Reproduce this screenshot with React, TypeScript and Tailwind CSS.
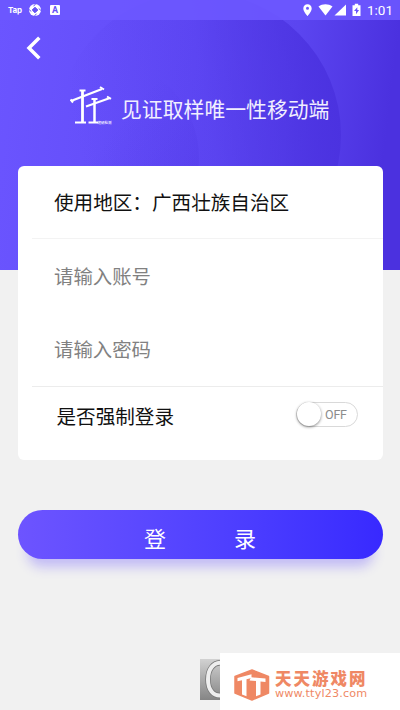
import React from 'react';

const cjk = "font-['Noto_Sans_CJK_SC',sans-serif]";

function StatusBar() {
  return (
    <div className="flex h-5 items-center bg-[#6d58ff]/90 pl-[8px] pr-[8px] text-white">
      <span className="w-[14px] text-[8px] font-bold leading-none tracking-[-0.2px] font-['Inter',sans-serif]">Tap</span>
      <svg className="ml-[7px] h-3 w-3" viewBox="0 0 12 12">
        <circle cx="6" cy="6" r="6" fill="white" />
        <path d="M6 3.200 8.800 6 6 8.800 3.200 6Z" fill="#6552f5" stroke="#6552f5" strokeWidth="1" />
        <path d="M6.500 0 4.500 2.300M12 6.500 9.700 4.500M5.500 12 7.500 9.700M0 5.500 2.300 7.500" stroke="#6552f5" strokeWidth="1" />
      </svg>
      <span className="ml-[9px] flex h-[10px] w-[10px] shrink-0 items-center justify-center rounded-[1px] bg-white text-[9px] font-bold leading-none text-[#6552f5] font-['Roboto',sans-serif]">A</span>
      <svg className="ml-auto h-[14px] w-[60px]" viewBox="0 0 60 14" fill="white">
        <path fillRule="evenodd" d="M5.500 1.200C3 1.200 1.300 3 1.300 5.400c0 3 4.200 7.600 4.200 7.600s4.200-4.600 4.200-7.600C9.700 3 8 1.200 5.500 1.200ZM5.500 3.800a1.500 1.500 0 1 1 0 3 1.500 1.500 0 0 1 0-3Z" />
        <path d="M16.500 3.600c4-3.200 9.800-3.200 14 0L23.500 12.500Z" />
        <path d="M44 1.500V12.500H32.500Z" />
        <path fillRule="evenodd" d="M52.800 0.700h3.400v1.500h2.300v10.700h-8V2.200h2.300ZM55.300 4.200 52 8.100h2v3.100L57.100 7H55.300Z" />
      </svg>
      <span className="ml-[5px] w-[25px] whitespace-nowrap text-[13.500px] leading-5 font-['Roboto',sans-serif]">1:01</span>
    </div>
  );
}

function HeaderBackdrop() {
  return (
    <svg className="absolute inset-0 h-[270px] w-full" viewBox="0 0 400 270" preserveAspectRatio="none">
      <defs>
        <linearGradient id="base" x1="0" y1="0" x2="1" y2="0.080">
          <stop offset="0" stopColor="#6b55ff" />
          <stop offset="0.500" stopColor="#614bf7" />
          <stop offset="0.750" stopColor="#5b45f0" />
          <stop offset="1" stopColor="#4b31df" />
        </linearGradient>
        <linearGradient id="large" gradientUnits="userSpaceOnUse" x1="75" y1="140" x2="341" y2="95">
          <stop offset="0" stopColor="#4a31df" stopOpacity="0" />
          <stop offset="0.500" stopColor="#4a31df" stopOpacity=".22" />
          <stop offset="1" stopColor="#4a31df" stopOpacity=".9" />
        </linearGradient>
        <linearGradient id="small" gradientUnits="userSpaceOnUse" x1="130" y1="110" x2="199" y2="165">
          <stop offset="0" stopColor="#4a31df" stopOpacity="0" />
          <stop offset="1" stopColor="#4a31df" stopOpacity=".2" />
        </linearGradient>
      </defs>
      <path d="M0 0H400V270H0Z" fill="url(#base)" />
      <circle cx="198" cy="135" r="143" fill="url(#large)" />
      <circle cx="99" cy="158" r="100" fill="url(#small)" />
    </svg>
  );
}

function BrandMark() {
  return (
    <div className="relative h-[40px] w-[43px]">
      <svg className="h-full w-full" viewBox="0 0 43 40" fill="none" stroke="white">
        <path d="M1 15 32 3" strokeWidth="2.400" />
        <path d="M16 20.500 40 12" strokeWidth="2" />
        <path d="M12.500 5V36" strokeWidth="2.800" />
        <path d="M24.500 13.500V36" strokeWidth="2.500" />
        <path d="M9.500 4.500h6M5 36.500h11M18.500 36.500h9.500M21.500 13h6" strokeWidth="1.800" />
        <path d="M30 1 34 3.500M0.500 13.500 3 16.500M37 10.500 41 12.800" strokeWidth="2" />
      </svg>
      <span className={`absolute bottom-[2px] left-[28px] whitespace-nowrap text-[3.500px] font-medium leading-none text-white ${cjk}`}>建研检测</span>
    </div>
  );
}

function ForceLoginSwitch() {
  return (
    <button type="button" aria-label="是否强制登录" className="mr-[24.500px] flex h-[25px] w-[62px] items-center rounded-full border-[1.500px] border-[#d9d9d9] bg-white">
      <span className="h-6 w-6 shrink-0 rounded-full bg-white shadow-[0_1px_3px_rgba(0,0,0,0.480)]" />
      <span className="ml-[4px] mt-[2px] text-[12.500px] leading-none tracking-[-0.200px] text-[#8c8c8c] font-['Roboto',sans-serif]">OFF</span>
    </button>
  );
}

function LoginCard() {
  return (
    <form className="relative ml-[17.500px] mt-[31px] h-[294px] w-[365px] rounded-[6px] bg-white text-[19.600px] text-[#111]">
      <div className="ml-[14.500px] flex h-[73px] items-center border-b border-[#f3f3f3] pl-[22px]">
        <span className="whitespace-nowrap">使用地区：广西壮族自治区</span>
      </div>
      <div className="flex h-[73px] items-center pl-[36.500px]">
        <input type="text" placeholder="请输入账号" className="w-full bg-transparent text-[19.400px] outline-none placeholder:text-[#818181]" />
      </div>
      <div className="ml-[14.500px] flex h-[75px] items-center border-b border-[#ececec] pl-[22px]">
        <input type="password" placeholder="请输入密码" className="w-full bg-transparent text-[19.400px] outline-none placeholder:text-[#818181]" />
      </div>
      <div className="flex h-[54px] items-center justify-between pl-[39px]">
        <span className="mt-[3px]">是否强制登录</span>
        <ForceLoginSwitch />
      </div>
    </form>
  );
}

function Watermark() {
  return (
    <div className="absolute bottom-0 right-0 flex h-[57px] w-[200px] items-start">
      <div className="mt-[6px] h-[41px] w-5 overflow-hidden bg-linear-to-b from-[#d2d2d2] to-[#858585]">
        <svg className="h-full w-full" viewBox="0 0 20 41">
          <path d="M24 4C12 2 8 12 8 20.500S12 39 24 36" fill="none" stroke="#777" strokeWidth="5.500" />
          <path d="M24 4C12 2 8 12 8 20.500S12 39 24 36" fill="none" stroke="#eeeeee" strokeWidth="4" />
        </svg>
      </div>
      <div className="flex h-full w-[180px] bg-white pl-[13.500px]">
        <svg className="mt-[16px] h-[32px] w-[36px]" viewBox="0 0 36 32">
          <path d="M18 1 34.500 7.500V24L18 31 1 24V7.500Z" fill="#ef8864" stroke="#ef8864" strokeWidth="1.500" strokeLinejoin="round" />
          <path d="M3.500 9 17.500 5.300V9L12.500 10.200V27.300L8 25.600V11.200L3.500 12.300Z" fill="white" />
          <path d="M15.500 11.500 17 8.300 31.500 9.500V13L26.500 12.500V25.500L22 27.300V12Z" fill="white" />
        </svg>
        <div className="ml-[5.500px] mt-[14px] flex flex-col text-[#ef8864]">
          <div className={`h-[20px] whitespace-nowrap text-[16.500px] font-black leading-[22px] tracking-[2px] ${cjk}`}>天天游戏网</div>
          <div className="whitespace-nowrap text-[11.200px] leading-[13px] tracking-[0.150px] font-['DejaVu_Sans',sans-serif]">www.ttyl23.com</div>
        </div>
      </div>
    </div>
  );
}

export default function App() {
  return (
    <main className="relative h-[710px] w-[400px] overflow-hidden bg-[#f1f1f1] font-['Noto_Sans_CJK_SC',sans-serif]">
      <HeaderBackdrop />
      <div className="relative">
        <StatusBar />
        <button type="button" aria-label="返回" className="ml-[25px] mt-[16px] block h-6 w-4">
          <svg className="h-full w-full" viewBox="0 0 16 24">
            <path d="M14.300 1.800 4 12 14.300 22.200" fill="none" stroke="white" strokeWidth="3.500" />
          </svg>
        </button>
        <header className="mt-[26px] flex h-[49px] items-start pl-[69.500px]">
          <BrandMark />
          <h1 className="ml-[8.500px] mt-[7px] whitespace-nowrap text-[20.850px] leading-[30px] text-[#f1efff]">见证取样唯一性移动端</h1>
        </header>
        <LoginCard />
        <button type="button" className="ml-[17.500px] mt-[49.500px] flex h-[49.500px] w-[365px] items-center justify-center gap-[68px] rounded-full bg-linear-to-r from-[#6d54ff] to-[#3829ff] pt-[6px] text-[22px] text-white shadow-[0_17px_12px_-9px_rgba(97,76,255,0.320)]">
          <span>登</span>
          <span>录</span>
        </button>
      </div>
      <Watermark />
    </main>
  );
}
